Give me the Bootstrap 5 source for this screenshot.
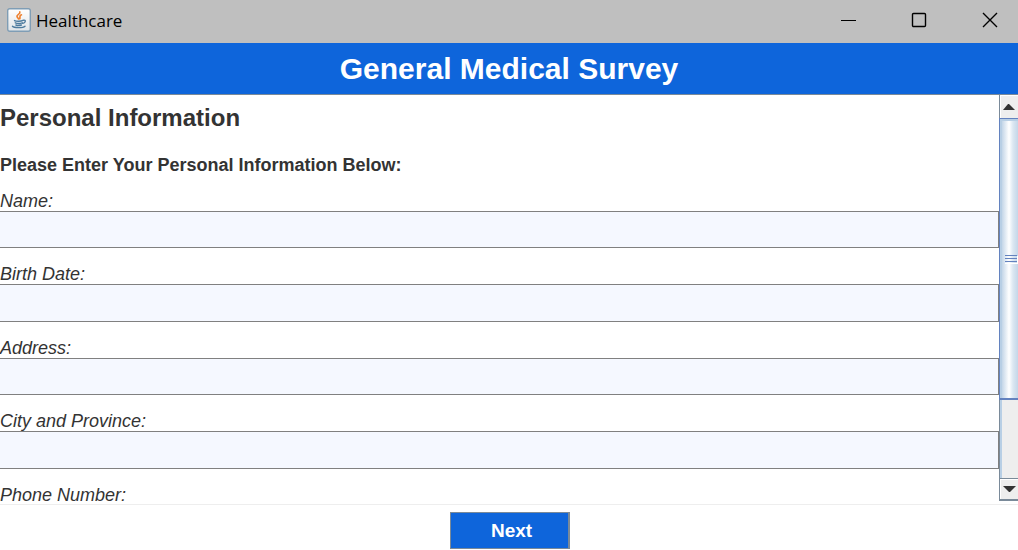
<!DOCTYPE html>
<html lang="en">
<head>
<meta charset="utf-8">
<meta name="viewport" content="width=device-width, initial-scale=1">
<title>Healthcare</title>
<link href="https://cdn.jsdelivr.net/npm/bootstrap@5.3.0/dist/css/bootstrap.min.css" rel="stylesheet">
<style>
  body { font-family: "Liberation Sans", Arial, sans-serif; color: #333; background: #fff; font-size: 18px; }
  .window-bar { background: #bfbfbf; height: 43px; color: #000; font-family: "Open Sans", "Noto Sans", sans-serif; font-size: 17px; line-height: 24px; padding-left: 7px; }
  .window-bar .app-name { margin-left: 5px; margin-top: -2px; }
  .window-btn { width: 70px; height: 40px; border: 0; background: transparent; padding: 0; }
  .window-btn:last-child { width: 64px; padding-left: 7px; }
  .window-btn svg { display: block; margin: 0 auto; }
  .survey-head { background: #0e65db; color: #fff; height: 52px; border-bottom: 1px solid #7a8a99; }
  .survey-head h1 { font-size: 30px; line-height: 52px; font-weight: 700; }
  .survey-body { min-height: 0; border-bottom: 1px solid #eee; }
  .survey-pane { min-width: 0; }
  .survey-pane h2 { font-size: 24px; line-height: 28px; font-weight: 700; padding-top: 9px; }
  .survey-pane h3 { font-size: 18px; line-height: 22px; font-weight: 700; margin-top: 22px; }
  .field-row label { display: block; font-style: italic; line-height: 20px; padding-top: 16px; }
  .field-row .form-control { height: 37px; border: 1px solid #808080; border-left: 0; background: #f5f8ff; border-radius: 0; box-shadow: none; }
  .field-row:nth-child(even) .form-control { height: 38px; }
  .field-list { margin-top: -1px; }
  .scroll-rail { width: 19px; margin-bottom: 3px; border-left: 1px solid #7a8a99; background: #eee; }
  .scroll-rail button { height: 23px; padding: 0; border: 0; background: #eee; box-shadow: inset 1px 1px #fff; }
  .scroll-rail .step-down { border-top: 1px solid #7a8a99; border-bottom: 2px solid #7a8a99; }
  .scroll-track { border-left: 2px solid #b8cfe5; }
  .scroll-thumb { flex: 281 1 0; margin-left: -3px; padding-top: 2px; border: 1px solid #6382bf; border-right: 0; border-bottom-width: 2px;
    box-shadow: inset 2px 2px #b8cfe5; background: linear-gradient(90deg, #c4d6e8 2px, #fff 9px, #dbe7f2 13px, #c4d6e8 18px); }
  .scroll-rest { flex: 79 1 0; }
  .survey-foot { height: 45px; padding-top: 7px; padding-left: 2px; }
  .btn-next { width: 120px; height: 37px; padding: 0 0 0 4px; border-radius: 0; border: 1px solid #7a8a99; border-right-width: 2px; background: #0e65db; color: #fff; font-size: 19px; font-weight: 700; line-height: 34px; }
  .btn-next:hover { background: #0b57be; color: #fff; }
</style>
</head>
<body class="d-flex flex-column vh-100 overflow-hidden">
  <header class="window-bar d-flex align-items-center flex-shrink-0">
    <svg class="mb-1" width="24" height="24" viewBox="0 0 24 24" aria-hidden="true">
      <defs><linearGradient id="tile" x2="0" y2="1"><stop stop-color="#fff"/><stop offset="1" stop-color="#dfe4e8"/></linearGradient></defs>
      <rect x=".7" y=".7" width="22.6" height="22.6" rx="2" fill="url(#tile)" stroke="#7f9db5" stroke-width="1.4"/>
      <g fill="none" stroke-linecap="round">
        <path d="M12.800 4c1 2-3.600 2.600-2.800 4.600.3 1 1.400 1.400 1.500 2.400M14.400 6.800c-2.600 1.200-1 2.100-1.600 3.900" stroke="#ee8130" stroke-width="1.700"/>
        <path d="M7.500 12.600c1.800 1 6.600.8 8.500-.2M8.300 14.800c2.200.8 5 .7 7 0M8.900 17c1.800.7 3.800.7 5.500 0M16.400 12.200c2.800-.6 2.500 2.300-.6 3.200M5.500 18.200c1.500 1.900 10.500 1.900 12.500 0" stroke="#4d7b9e" stroke-width="1.400"/>
      </g>
    </svg>
    <span class="app-name">Healthcare</span>
    <div class="d-flex ms-auto mb-1">
      <button class="window-btn" type="button" aria-label="Minimize"><svg width="16" height="16"><path d="M0 8.500h15" stroke="#000"/></svg></button>
      <button class="window-btn" type="button" aria-label="Maximize"><svg width="16" height="16"><rect x="1.500" y="1.500" width="13" height="13" rx="1" fill="none" stroke="#000" stroke-width="1.400"/></svg></button>
      <button class="window-btn" type="button" aria-label="Close"><svg width="16" height="16"><path d="M1 1l14 14M15 1L1 15" stroke="#000" stroke-width="1.400"/></svg></button>
    </div>
  </header>

  <div class="survey-head flex-shrink-0 text-center"><h1 class="m-0">General Medical Survey</h1></div>

  <main class="survey-body d-flex flex-grow-1">
    <form id="survey" class="survey-pane flex-grow-1 overflow-hidden">
      <h2 class="mb-0">Personal Information</h2>
      <h3 class="mb-0">Please Enter Your Personal Information Below:</h3>
      <div class="field-list">
        <div class="field-row"><label for="name">Name:</label><input class="form-control" id="name" type="text"></div>
        <div class="field-row"><label for="birth">Birth Date:</label><input class="form-control" id="birth" type="text"></div>
        <div class="field-row"><label for="address">Address:</label><input class="form-control" id="address" type="text"></div>
        <div class="field-row"><label for="city">City and Province:</label><input class="form-control" id="city" type="text"></div>
        <div class="field-row"><label for="phone">Phone Number:</label><input class="form-control" id="phone" type="text"></div>
      </div>
    </form>
    <div class="scroll-rail d-flex flex-column flex-shrink-0">
      <button type="button" class="d-flex align-items-center justify-content-center" aria-label="Scroll up"><svg width="12" height="6"><path d="M0 6L5 0h1l6 6z" fill="#333"/></svg></button>
      <div class="scroll-track d-flex flex-column flex-grow-1">
        <div class="scroll-thumb d-flex align-items-center justify-content-end"><svg width="13" height="9"><path d="M0 9h13V1h-1v7H0z" fill="#fff"/><path d="M0 .5h12M0 3.500h12M0 6.500h12" stroke="#6382bf"/></svg></div>
        <div class="scroll-rest"></div>
      </div>
      <button type="button" class="step-down d-flex align-items-center justify-content-center" aria-label="Scroll down"><svg width="13" height="6"><path d="M0 0h13L7 6H6z" fill="#333"/></svg></button>
    </div>
  </main>

  <footer class="survey-foot flex-shrink-0 text-center"><button class="btn btn-next" type="submit" form="survey">Next</button></footer>
<script src="https://cdn.jsdelivr.net/npm/bootstrap@5.3.0/dist/js/bootstrap.bundle.min.js"></script>
</body>
</html>
